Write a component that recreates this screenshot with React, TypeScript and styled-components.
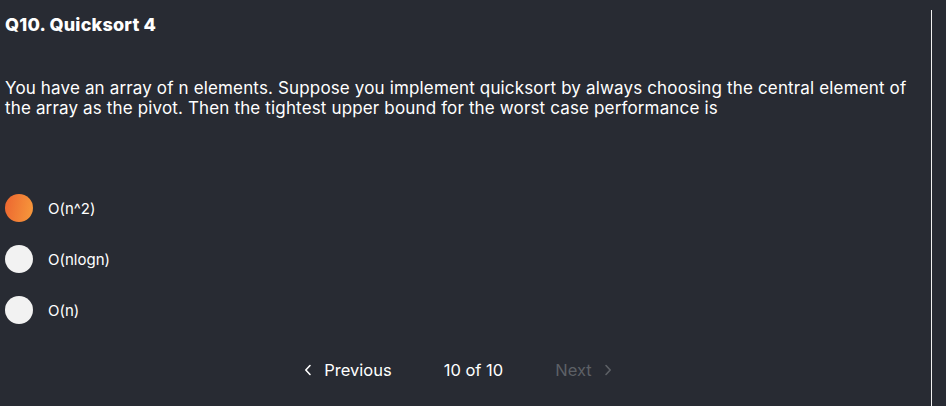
import React, { useState } from 'react'
import styled, { createGlobalStyle } from 'styled-components'

const GlobalStyle = createGlobalStyle`
  html, body {
    margin: 0;
    padding: 0;
    background: #282b33;
  }
  body {
    width: 946px;
    height: 406px;
    overflow: hidden;
    font-family: 'Inter', 'Liberation Sans', sans-serif;
    color: #ffffff;
  }
`

const Page = styled.div`
  display: flex;
  height: 406px;
  background: #282b33;
`

const Panel = styled.div`
  width: 926px;
  margin-top: 10px;
  padding: 0 0 0 5px;
  border-right: 1px solid #f2f2f2;
  display: flex;
  flex-direction: column;
`

const Title = styled.h2`
  margin: 4px 0 0;
  font-size: 18px;
  font-weight: 800;
  line-height: 22px;
  letter-spacing: 0.2px;
`

const Question = styled.p`
  margin: 42px 0 0;
  padding-right: 4px;
  font-size: 17px;
  line-height: 20px;
  letter-spacing: 0.15px;
`

const Options = styled.div`
  display: flex;
  flex-direction: column;
  gap: 23px;
  margin-top: 76px;
`

const Option = styled.label`
  display: flex;
  align-items: center;
  gap: 15px;
  cursor: pointer;
  font-size: 15px;
`

const Dot = styled.span<{ $active: boolean }>`
  width: 28px;
  height: 28px;
  border-radius: 50%;
  background: ${({ $active }) => ($active ? 'linear-gradient(100deg, #ec6530, #f79a3c)' : '#f2f2f2')};
`

const Pager = styled.div`
  display: flex;
  justify-content: center;
  align-items: center;
  margin-top: 36px;
  font-size: 16.5px;
  gap: 52px;
  padding-right: 20px;
`

const PageButton = styled.button<{ $disabled?: boolean }>`
  display: flex;
  align-items: center;
  gap: 12px;
  background: none;
  border: none;
  padding: 0;
  font: inherit;
  color: ${({ $disabled }) => ($disabled ? '#5d6066' : '#ffffff')};
  cursor: ${({ $disabled }) => ($disabled ? 'default' : 'pointer')};
`

const Chevron = ({ dir }: { dir: 'left' | 'right' }) => (
  <svg width="8" height="12" viewBox="0 0 8 12" fill="none">
    <path
      d={dir === 'left' ? 'M6 1.5L1.8 6L6 10.5' : 'M2 1.5L6.2 6L2 10.5'}
      stroke="currentColor"
      strokeWidth="1.6"
      strokeLinecap="round"
      strokeLinejoin="round"
    />
  </svg>
)

const answers = ['O(n^2)', 'O(nlogn)', 'O(n)']

const App = () => {
  const [picked, setPicked] = useState(0)

  return (
    <Page>
      <GlobalStyle />
      <Panel>
        <Title>Q10. Quicksort 4</Title>
        <Question>
          You have an array of n elements. Suppose you implement quicksort by always choosing the central element of
          the array as the pivot. Then the tightest upper bound for the worst case performance is
        </Question>
        <Options>
          {answers.map((a, i) => (
            <Option key={a} onClick={() => setPicked(i)}>
              <Dot $active={picked === i} />
              {a}
            </Option>
          ))}
        </Options>
        <Pager>
          <PageButton>
            <Chevron dir="left" />
            Previous
          </PageButton>
          <span>10 of 10</span>
          <PageButton $disabled>
            Next
            <Chevron dir="right" />
          </PageButton>
        </Pager>
      </Panel>
    </Page>
  )
}

export default App
